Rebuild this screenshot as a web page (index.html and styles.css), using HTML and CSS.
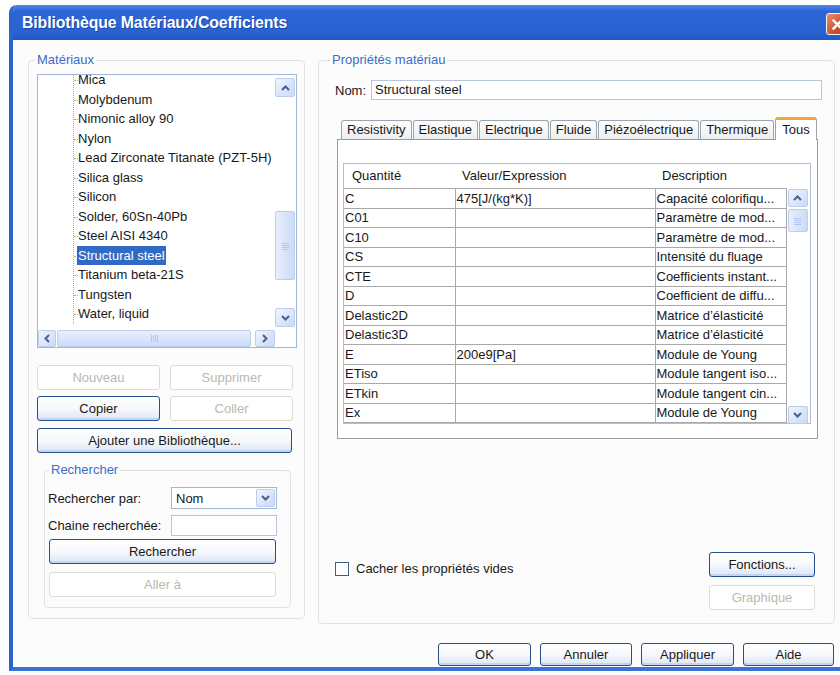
FILE: index.html
```html
<!DOCTYPE html>
<html lang="fr">
<head>
<meta charset="utf-8">
<title>Bibliothèque Matériaux/Coefficients</title>
<link rel="stylesheet" href="styles.css">
</head>
<body>
<div class="window">
  <div class="titlebar">
    <span class="title">Bibliothèque Matériaux/Coefficients</span>
    <span class="close"><svg width="13" height="13" viewBox="0 0 13 13"><path d="M2.5 2.5 L10.5 10.5 M10.5 2.5 L2.5 10.5" stroke="#fff" stroke-width="2.4" stroke-linecap="square"/></svg></span>
  </div>

  <div class="client">
    <div class="panes">
      <!-- Material list and library actions -->
      <fieldset class="group group-mat">
        <legend>Matériaux</legend>
        <div class="listbox">
          <div class="tree-view">
            <ul class="tree">
              <li>Mica</li>
              <li>Molybdenum</li>
              <li>Nimonic alloy 90</li>
              <li>Nylon</li>
              <li>Lead Zirconate Titanate (PZT-5H)</li>
              <li>Silica glass</li>
              <li>Silicon</li>
              <li>Solder, 60Sn-40Pb</li>
              <li>Steel AISI 4340</li>
              <li><span class="sel">Structural steel</span></li>
              <li>Titanium beta-21S</li>
              <li>Tungsten</li>
              <li>Water, liquid</li>
            </ul>
          </div>
          <div class="vscroll">
            <span class="sb-btn"><svg width="9" height="6" viewBox="0 0 9 6"><path d="M1 5 L4.5 1.5 L8 5" fill="none" stroke="#4a5f8e" stroke-width="2"/></svg></span>
            <span class="sb-track"><span class="sb-thumb list-thumb"><svg width="7" height="8" viewBox="0 0 7 8"><path d="M0 1.5H7M0 3.5H7M0 5.5H7M0 7.5H7" stroke="#b3c5ea" stroke-width="1"/></svg></span></span>
            <span class="sb-btn"><svg width="9" height="6" viewBox="0 0 9 6"><path d="M1 1 L4.5 4.5 L8 1" fill="none" stroke="#4a5f8e" stroke-width="2"/></svg></span>
          </div>
          <div class="hscroll">
            <span class="sb-btn sb-left"><svg width="6" height="9" viewBox="0 0 6 9"><path d="M5 1 L1.5 4.5 L5 8" fill="none" stroke="#4a5f8e" stroke-width="2"/></svg></span>
            <span class="sb-thumb h-thumb"><svg width="8" height="7" viewBox="0 0 8 7"><path d="M1.5 0V7M3.5 0V7M5.5 0V7M7.5 0V7" stroke="#b3c5ea" stroke-width="1"/></svg></span>
            <span class="sb-btn sb-right"><svg width="6" height="9" viewBox="0 0 6 9"><path d="M1 1 L4.5 4.5 L1 8" fill="none" stroke="#4a5f8e" stroke-width="2"/></svg></span>
          </div>
          <div class="sb-corner"></div>
        </div>

        <div class="btn-grid">
          <button class="btn" disabled>Nouveau</button>
          <button class="btn" disabled>Supprimer</button>
          <button class="btn">Copier</button>
          <button class="btn" disabled>Coller</button>
        </div>
        <button class="btn btn-wide">Ajouter une Bibliothèque...</button>

        <fieldset class="group group-search">
          <legend>Rechercher</legend>
          <div class="search-row row-combo">
            <span class="search-label">Rechercher par:</span>
            <span class="combo">Nom<span class="combo-btn"><svg width="9" height="6" viewBox="0 0 9 6"><path d="M1 1 L4.5 4.5 L8 1" fill="none" stroke="#4a5f8e" stroke-width="2"/></svg></span></span>
          </div>
          <div class="search-row row-field">
            <span class="search-label">Chaine recherchée:</span>
            <span class="field"></span>
          </div>
          <button class="btn btn-search">Rechercher</button>
          <button class="btn btn-search btn-goto" disabled>Aller à</button>
        </fieldset>
      </fieldset>

      <!-- Properties of the selected material -->
      <fieldset class="group group-props">
        <legend>Propriétés matériau</legend>
        <div class="nom-row">
          <span class="nom-label">Nom:</span>
          <span class="nom-field">Structural steel</span>
        </div>

        <div class="tabs">
          <span class="tab">Resistivity</span>
          <span class="tab">Elastique</span>
          <span class="tab">Electrique</span>
          <span class="tab">Fluide</span>
          <span class="tab">Piézoélectrique</span>
          <span class="tab">Thermique</span>
          <span class="tab active">Tous</span>
        </div>
        <div class="tab-panel">
          <div class="grid">
            <div class="grid-head">
              <span>Quantité</span>
              <span>Valeur/Expression</span>
              <span>Description</span>
            </div>
            <div class="grid-body">
              <table class="cells">
                <colgroup><col class="c1"><col class="c2"><col class="c3"></colgroup>
                <tr><td>C</td><td>475[J/(kg*K)]</td><td>Capacité colorifiqu...</td></tr>
                <tr><td>C01</td><td></td><td>Paramètre de mod...</td></tr>
                <tr><td>C10</td><td></td><td>Paramètre de mod...</td></tr>
                <tr><td>CS</td><td></td><td>Intensité du fluage</td></tr>
                <tr><td>CTE</td><td></td><td>Coefficients instant...</td></tr>
                <tr><td>D</td><td></td><td>Coefficient de diffu...</td></tr>
                <tr><td>Delastic2D</td><td></td><td>Matrice d’élasticité</td></tr>
                <tr><td>Delastic3D</td><td></td><td>Matrice d’élasticité</td></tr>
                <tr><td>E</td><td>200e9[Pa]</td><td>Module de Young</td></tr>
                <tr><td>ETiso</td><td></td><td>Module tangent iso...</td></tr>
                <tr><td>ETkin</td><td></td><td>Module tangent cin...</td></tr>
                <tr><td>Ex</td><td></td><td>Module de Young</td></tr>
              </table>
              <div class="grid-vscroll">
                <span class="sb-btn"><svg width="9" height="6" viewBox="0 0 9 6"><path d="M1 5 L4.5 1.5 L8 5" fill="none" stroke="#4a5f8e" stroke-width="2"/></svg></span>
                <span class="sb-track"><span class="sb-thumb grid-thumb"><svg width="7" height="8" viewBox="0 0 7 8"><path d="M0 1.5H7M0 3.5H7M0 5.5H7M0 7.5H7" stroke="#b3c5ea" stroke-width="1"/></svg></span></span>
                <span class="sb-btn"><svg width="9" height="6" viewBox="0 0 9 6"><path d="M1 1 L4.5 4.5 L8 1" fill="none" stroke="#4a5f8e" stroke-width="2"/></svg></span>
              </div>
            </div>
          </div>
        </div>

        <div class="opts">
          <label class="check"><span class="check-box"></span>Cacher les propriétés vides</label>
          <div class="opt-btns">
            <button class="btn">Fonctions...</button>
            <button class="btn" disabled>Graphique</button>
          </div>
        </div>
      </fieldset>
    </div>

    <div class="footer">
      <button class="btn btn-ok">OK</button>
      <button class="btn btn-cancel">Annuler</button>
      <button class="btn btn-apply">Appliquer</button>
      <button class="btn btn-help">Aide</button>
    </div>
  </div>
</div>
</body>
</html>
```

FILE: styles.css
```css
html, body {
  margin: 0;
  height: 100%;
  overflow: hidden;
}

body {
  background: #fff;
  font-family: "Liberation Sans", Arial, sans-serif;
  font-size: 13px;
  color: #181818;
}

/* ---------- window frame ---------- */
.window {
  box-sizing: border-box;
  margin: 5px 0 0 9px;
  width: 850px;
  height: 666px;
  border-left: 4px solid #2d63cc;
  border-bottom: 4px solid #3a72d6;
  border-top-left-radius: 8px;
  background: #fcfcfc;
  display: flex;
  flex-direction: column;
  overflow: hidden;
}

.titlebar {
  flex: none;
  height: 35px;
  display: flex;
  align-items: center;
  padding-left: 9px;
  background: linear-gradient(#4d8ae8 0%, #2d66d4 18%, #2a62d2 75%, #2159c6 100%);
}

.title {
  color: #fff;
  font-weight: bold;
  font-size: 15.8px;
  letter-spacing: -0.1px;
  text-shadow: 1px 1px 0 #1a45a8;
}

.close {
  margin: 3px 11px 0 auto;
  width: 22px;
  height: 22px;
  box-sizing: border-box;
  border: 1px solid #f4f4f4;
  border-radius: 3px;
  background: linear-gradient(135deg, #e9906c, #cf4f2c 60%, #b8401f);
  display: flex;
  align-items: center;
  justify-content: center;
}

.client {
  flex: 1;
  padding: 13px 0 0 15px;
}

.panes {
  display: flex;
  align-items: flex-start;
}

/* ---------- group boxes ---------- */
.group {
  box-sizing: border-box;
  margin: 0;
  min-width: 0;
  border: 1px solid #e3e3dd;
  border-radius: 4px;
}

.group > legend {
  padding: 0 2px;
  line-height: 14px;
  color: #3b6dc5;
}

.group-mat {
  width: 277px;
  height: 566px;
  padding: 7px 7px 0 8px;
}

.group-mat > legend {
  margin-left: -2px;
}

.group-props {
  width: 517px;
  height: 571px;
  margin-left: 13px;
  padding: 6px 11px 0 14px;
}

.group-props > legend {
  margin-left: -3px;
}

/* ---------- material list ---------- */
.listbox {
  box-sizing: border-box;
  width: 260px;
  height: 274px;
  border: 1px solid #a3b6d3;
  background: #fff;
  display: grid;
  grid-template-columns: 237px 21px;
  grid-template-rows: 254px 18px;
}

.tree-view {
  overflow: hidden;
}

.tree {
  list-style: none;
  margin: -5px 0 0 35px;
  padding: 0;
  border-left: 1px dotted #a8a8a8;
}

.tree li {
  height: 19.5px;
  line-height: 19.5px;
  white-space: nowrap;
}

.tree li::before {
  content: "";
  display: inline-block;
  width: 4px;
  vertical-align: middle;
  border-top: 1px dotted #a8a8a8;
}

.sel {
  background: #316ac5;
  color: #fff;
  padding: 2px 1px;
  margin-left: -1px;
}

/* ---------- scroll bars ---------- */
.sb-btn {
  box-sizing: border-box;
  flex: none;
  display: flex;
  align-items: center;
  justify-content: center;
  border: 1px solid #bccdf0;
  border-radius: 2px;
  background: linear-gradient(135deg, #f0f5fe, #c8d9f8);
}

.sb-track {
  flex: 1;
  display: flex;
  flex-direction: column;
}

.sb-thumb {
  box-sizing: border-box;
  display: flex;
  align-items: center;
  justify-content: center;
  border: 1px solid #bccdf0;
  border-radius: 2px;
  background: linear-gradient(90deg, #e8effd, #cbdbf7);
}

.vscroll {
  display: flex;
  flex-direction: column;
  padding: 3px 1px 2px 0;
}

.vscroll .sb-btn {
  height: 19px;
}

.list-thumb {
  margin-top: 114px;
  height: 69px;
}

.hscroll {
  display: flex;
  padding-top: 1px;
}

.hscroll .sb-btn {
  height: 17px;
}

.sb-left {
  width: 18px;
}

.sb-right {
  width: 20px;
  margin-left: auto;
}

.h-thumb {
  width: 194px;
  height: 17px;
  margin-left: 1px;
  background: linear-gradient(#e8effd, #cbdbf7);
}

.sb-corner {
  background: #fff;
}

/* ---------- push buttons ---------- */
.btn {
  box-sizing: border-box;
  height: 25px;
  padding: 0;
  font: inherit;
  color: #181818;
  border: 1px solid #284e8c;
  border-radius: 3px;
  background: linear-gradient(#ffffff 0%, #f6f8fb 50%, #dbe6f6 100%);
  box-shadow: inset 0 -2px 0 #c3d5f0;
}

.btn:disabled {
  color: #b9b9b1;
  border-color: #dcdcd5;
  background: #fff;
  box-shadow: none;
}

.btn-grid {
  display: grid;
  grid-template-columns: 123px 123px;
  column-gap: 10px;
  row-gap: 6px;
  margin-top: 17px;
}

.btn-wide {
  display: block;
  width: 255px;
  margin-top: 7px;
}

/* ---------- search box ---------- */
.group-search {
  width: 247px;
  height: 145px;
  margin: 10px 0 0 7px;
  padding: 0 0 0 4px;
}

.search-row {
  display: flex;
  align-items: center;
}

.row-combo {
  margin-top: 10px;
  height: 22px;
}

.row-field {
  margin-top: 6px;
  height: 21px;
}

.search-label {
  width: 123px;
  margin-left: -1px;
}

.combo {
  box-sizing: border-box;
  width: 106px;
  height: 22px;
  border: 1px solid #a3b6d3;
  background: #fff;
  display: flex;
  align-items: center;
  padding-left: 4px;
}

.combo-btn {
  box-sizing: border-box;
  margin: 0 1px 0 auto;
  width: 19px;
  height: 18px;
  border: 1px solid #bccdf0;
  border-radius: 2px;
  background: linear-gradient(135deg, #f0f5fe, #c8d9f8);
  display: flex;
  align-items: center;
  justify-content: center;
}

.field {
  box-sizing: border-box;
  width: 106px;
  height: 21px;
  border: 1px solid #b7c5da;
  background: #fff;
}

.btn-search {
  display: block;
  width: 227px;
  margin-top: 3px;
}

.btn-goto {
  margin-top: 8px;
}

/* ---------- properties ---------- */
.nom-row {
  display: flex;
  align-items: center;
  margin-top: 7px;
  height: 20px;
}

.nom-label {
  width: 36px;
  margin-left: 2px;
}

.nom-field {
  box-sizing: border-box;
  width: 451px;
  height: 20px;
  line-height: 18px;
  padding-left: 3px;
  border: 1px solid #b7c5da;
  background: #fff;
}

.tabs {
  display: flex;
  align-items: flex-end;
  height: 22px;
  margin: 17px 0 0 8px;
}

.tab {
  box-sizing: border-box;
  height: 19px;
  line-height: 18px;
  padding: 0 5px;
  margin-right: 1px;
  border: 1px solid #9aa4ac;
  border-bottom: none;
  border-radius: 3px 3px 0 0;
  background: linear-gradient(#fefefe, #eceef0);
}

.tab.active {
  position: relative;
  z-index: 1;
  height: 23px;
  line-height: 19px;
  margin-bottom: -1px;
  padding: 0 6px;
  border-top: 3px solid #f3a43a;
  background: #fff;
}

.tab-panel {
  box-sizing: border-box;
  width: 481px;
  height: 300px;
  margin-left: 4px;
  padding: 23px 0 0 5px;
  border: 1px solid #939da5;
  background: #fff;
}

/* ---------- property table ---------- */
.grid {
  box-sizing: border-box;
  width: 468px;
  height: 261px;
  border: 1px solid #afc0d6;
}

.grid-head {
  display: grid;
  grid-template-columns: 111px 200px 130px;
  height: 24px;
  line-height: 24px;
}

.grid-head span:nth-child(1) { padding-left: 8px; }
.grid-head span:nth-child(2) { padding-left: 7px; }
.grid-head span:nth-child(3) { padding-left: 7px; }

.grid-body {
  display: flex;
  align-items: flex-start;
}

.cells {
  border-collapse: collapse;
  table-layout: fixed;
  width: 442px;
}

.c1 { width: 111px; }
.c2 { width: 200px; }
.c3 { width: 131px; }

.cells tr {
  height: 19.5px;
}

.cells td {
  padding: 0 0 0 1px;
  line-height: 17px;
  border: 1px solid #a9a9a9;
  white-space: nowrap;
  overflow: hidden;
}

.cells td:first-child {
  border-left: none;
}

.grid-vscroll {
  width: 20px;
  height: 235px;
  margin: 1px 0 0 1px;
  display: flex;
  flex-direction: column;
}

.grid-vscroll .sb-btn {
  height: 18px;
}

.grid-thumb {
  margin-top: 2px;
  height: 23px;
}

/* ---------- lower options ---------- */
.opts {
  display: flex;
  align-items: flex-start;
  margin-top: 113px;
}

.check {
  display: flex;
  align-items: center;
  gap: 7px;
  height: 25px;
  margin: 4px 0 0 2px;
}

.check-box {
  box-sizing: border-box;
  width: 14px;
  height: 14px;
  border: 1px solid #3f5e8e;
  background: #fff;
}

.opt-btns {
  display: flex;
  flex-direction: column;
  gap: 8px;
  margin: 0 8px 0 auto;
}

.opt-btns .btn {
  width: 106px;
}

/* ---------- dialog buttons ---------- */
.footer {
  display: flex;
  gap: 9px;
  margin: 19px 0 0 410px;
}

.footer .btn {
  height: 23px;
}

.btn-ok { width: 93px; }
.btn-cancel { width: 92px; }
.btn-apply { width: 93px; }
.btn-help { width: 91px; }
```
